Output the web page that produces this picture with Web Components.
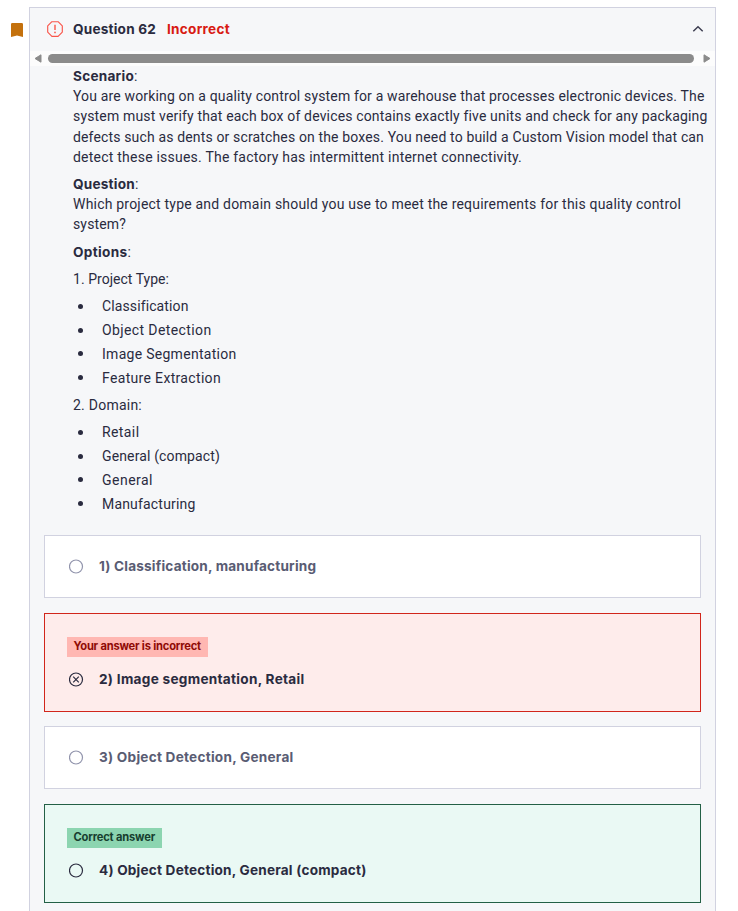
<!DOCTYPE html>
<html lang="en">
<head>
<meta charset="utf-8">
<title>Question 62</title>
<style>
html,body{margin:0;height:911px;overflow:hidden;background:#fff}
body{font:14px/20.16px Roboto,"Liberation Sans",sans-serif;color:#2a2b3f}
</style>
</head>
<body>
<quiz-page></quiz-page>
<script>
const make = (name, html, setup) => customElements.define(name, class extends HTMLElement {
  connectedCallback() {
    if (this.shadowRoot) return;
    const t = document.createElement('template');
    t.innerHTML = html;
    this.attachShadow({mode: 'open'}).append(t.content.cloneNode(true));
    if (setup) setup(this, this.shadowRoot);
  }
});

/* One line of text, tracked so that it fills the measure given by w. */
make('text-line', `<style>:host{display:block;white-space:nowrap;width:max-content}:host([b]){font-weight:700;font-family:Inter,sans-serif;font-size:.97em}</style><slot></slot>`, el => {
  const w = parseFloat(el.getAttribute('w'));
  const n = el.textContent.length;
  if (!w || n < 2) return;
  const natural = el.getBoundingClientRect().width;
  el.style.letterSpacing = ((w - natural) / n).toFixed(4) + 'px';
});

make('book-mark', `<style>:host{display:block;width:12px;height:14px}svg{display:block}</style>
<svg width="12" height="14" viewBox="0 0 12 14"><path fill="#c4710d" d="M1.3 0h9.4Q12 0 12 1.3V14L6 12.4 0 14V1.3Q0 0 1.3 0z"/></svg>`);

make('question-header', `<style>
:host{display:flex;align-items:center;height:43px;padding:0 11px 0 17px}
.alert{margin-right:10px}.t{margin-right:11px}.wrong{color:#d81a12}.up{margin-left:auto}
svg{display:block}.alert,.up{margin-bottom:2px}</style>
<svg class="alert" width="16" height="16" viewBox="0 0 16 16" fill="none" stroke="#f9564b" stroke-width="1.15"><path d="M4.9.7h6.2L15.3 4.9v6.2L11.1 15.3H4.9L.7 11.1V4.9z" stroke-linejoin="round"/><path d="M8 3.7v5.2" stroke-width="1.4"/><circle cx="8" cy="11.4" r=".85" fill="#f9564b" stroke="none"/></svg>
<text-line class="t" b w="83">Question 62</text-line>
<text-line class="wrong" b w="63">Incorrect</text-line>
<svg class="up" width="12" height="8" viewBox="0 0 12 8" fill="none" stroke="#3c3d50" stroke-width="1.45"><path d="M1.3 6.2L6 1.7l4.7 4.5"/></svg>`);

make('scroll-strip', `<style>
:host{display:flex;align-items:center;height:15px;background:#fcfcfc;padding:0 4px 0 4px;gap:6px}
.bar{flex:1;height:9px;border-radius:5px;background:#8b8b8b;margin-right:3px}svg{display:block}</style>
<svg width="8" height="9" viewBox="0 0 8 9"><path d="M7 .8v7.4L1 4.5z" fill="#8b8b8b" stroke="#8b8b8b" stroke-width="1" stroke-linejoin="round"/></svg>
<div class="bar"></div>
<svg width="8" height="9" viewBox="0 0 8 9"><path d="M1 .8v7.4L7 4.5z" fill="#8b8b8b" stroke="#8b8b8b" stroke-width="1" stroke-linejoin="round"/></svg>`);

make('bullet-item', `<style>
:host{display:flex;align-items:center;height:20.16px;margin-bottom:3.6px;padding-left:5px}
:host(:last-child){margin-bottom:0}
i{width:5px;height:5px;border-radius:50%;background:#2a2b3f;margin:0 19px 0 0}</style><i></i><slot></slot>`);

make('question-prompt', `<style>
:host{display:flex;flex-direction:column;gap:7.2px;padding:.1px 0 0 43px}
.h{display:flex;height:20.16px}.h [b]{line-height:20.4px}</style>
<section><div class="h"><text-line b w="61">Scenario</text-line><text-line>:</text-line></div>
<text-line w="631.5">You are working on a quality control system for a warehouse that processes electronic devices. The</text-line>
<text-line w="634">system must verify that each box of devices contains exactly five units and check for any packaging</text-line>
<text-line w="631">defects such as dents or scratches on the boxes. You need to build a Custom Vision model that can</text-line>
<text-line w="449">detect these issues. The factory has intermittent internet connectivity.</text-line></section>
<section><div class="h"><text-line b w="62">Question</text-line><text-line>:</text-line></div>
<text-line w="608">Which project type and domain should you use to meet the requirements for this quality control</text-line>
<text-line w="53">system?</text-line></section>
<section class="h"><text-line b w="54.5">Options</text-line><text-line>:</text-line></section>
<text-line w="96">1. Project Type:</text-line>
<section>
<bullet-item><text-line w="86">Classification</text-line></bullet-item>
<bullet-item><text-line w="109.5">Object Detection</text-line></bullet-item>
<bullet-item><text-line w="134.5">Image Segmentation</text-line></bullet-item>
<bullet-item><text-line w="119">Feature Extraction</text-line></bullet-item>
</section>
<text-line w="69">2. Domain:</text-line>
<section>
<bullet-item><text-line w="37.5">Retail</text-line></bullet-item>
<bullet-item><text-line w="118">General (compact)</text-line></bullet-item>
<bullet-item><text-line w="51">General</text-line></bullet-item>
<bullet-item><text-line w="93.5">Manufacturing</text-line></bullet-item>
</section>`);

make('answer-tag', `<style>
:host{display:flex;align-items:center;box-sizing:border-box;height:20px;width:141px;padding:0 0 1px 6.5px;font-size:11.5px;line-height:19px;background:#ffb7b2;color:#8f0a05;margin-bottom:12px}
:host([ok]){width:95px;background:#8cd5b0;color:#173e2f}</style><slot></slot>`);

make('answer-card', `<style>
:host{display:flex;flex-direction:column;box-sizing:border-box;height:63px;padding:20px 0 0 22px;background:#fff;border:1px solid #d1d2e0;color:#595c73}
:host([state]){height:99px;padding-top:23px;color:#2a2b3f}
:host([state=wrong]){background:#feeceb;border-color:#d1261b}
:host([state=right]){background:#eaf9f4;border-color:#246046}
.row{display:flex;align-items:center;padding-left:1.5px;height:20px}
svg{display:block;margin:1px 15.5px 0 0}
path{display:none}:host([state=wrong]) path{display:block}
svg{stroke:#9194ac}:host([state]) svg{stroke:#2a2b3f}</style>
<slot name="tag"></slot>
<div class="row"><svg width="15" height="15" viewBox="0 0 15 15" fill="none" stroke-width="1.2"><circle cx="7" cy="7.5" r="6.5"/><path d="M4.2 4.7l5.6 5.6M9.8 4.7L4.2 10.3"/></svg><slot></slot></div>`);

make('question-panel', `<style>
:host{display:block;box-sizing:border-box;width:687px;height:920px;border:1px solid #d1d2e0;background:#f6f7f9}
.cards{display:grid;margin:20.9px 14px 0}
.cards>*{margin-bottom:15px}.cards>[state]{margin-bottom:14px}</style>
<question-header></question-header><scroll-strip></scroll-strip><question-prompt></question-prompt>
<div class="cards">
<answer-card><text-line b w="217">1) Classification, manufacturing</text-line></answer-card>
<answer-card state="wrong"><answer-tag slot="tag"><text-line b w="127.5">Your answer is incorrect</text-line></answer-tag><text-line b w="205.5">2) Image segmentation, Retail</text-line></answer-card>
<answer-card><text-line b w="194.5">3) Object Detection, General</text-line></answer-card>
<answer-card state="right"><answer-tag ok slot="tag"><text-line b w="81.5">Correct answer</text-line></answer-tag><text-line b w="267.5">4) Object Detection, General (compact)</text-line></answer-card>
</div>`);

make('quiz-page', `<style>:host{display:flex;align-items:flex-start;gap:6px;padding:7px 0 0 11px}book-mark{margin-top:16px}</style><book-mark></book-mark><question-panel></question-panel>`);
</script>
</body>
</html>
